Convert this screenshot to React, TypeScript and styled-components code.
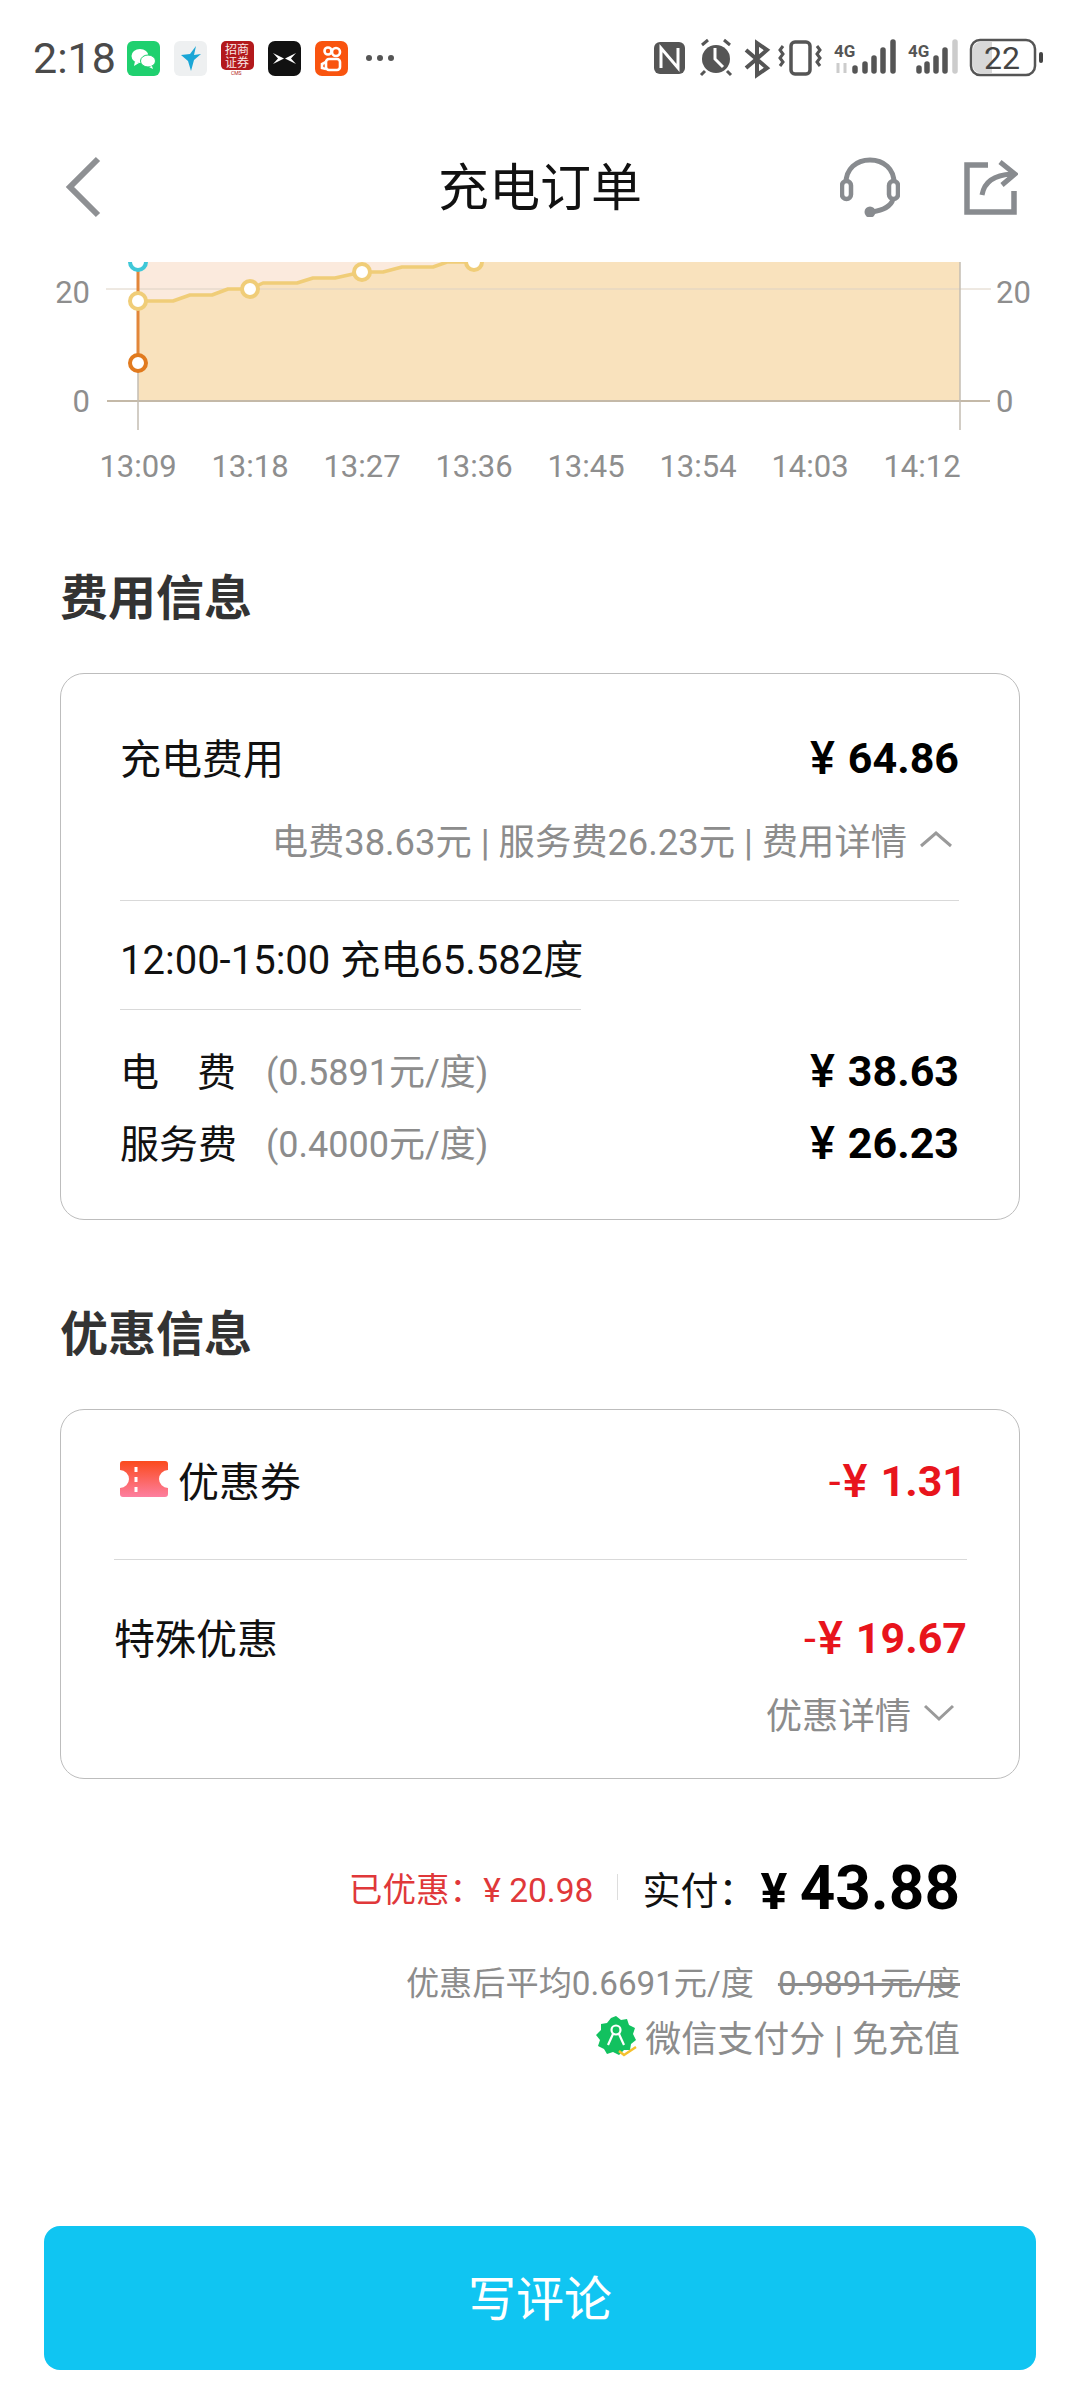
import styled, { createGlobalStyle } from "styled-components";

const GlobalStyle = createGlobalStyle`
  html, body {
    margin: 0;
    padding: 0;
    background: #fff;
    font-family: "Roboto", "Noto Sans CJK SC", sans-serif;
  }
`;

const Page = styled.div`
  width: 1080px;
  height: 2400px;
  overflow: hidden;
  background: #fff;
  display: flex;
  flex-direction: column;
`;

const StatusBar = styled.div`
  height: 116px;
  padding: 0 30px 0 33px;
  box-sizing: border-box;
  display: flex;
  align-items: center;
  color: #4a4a4a;
`;

const Time = styled.span`
  font-size: 43px;
  width: 94px;
`;

const AppIcons = styled.div`
  display: flex;
  align-items: center;
  gap: 14px;
`;

const AppIcon = styled.svg`
  width: 33px;
  height: 35px;
  display: block;
`;

const MoreDots = styled.span`
  margin-left: 18px;
  display: flex;
  gap: 5px;
`;

const Dot = styled.i`
  width: 6px;
  height: 6px;
  border-radius: 50%;
  background: #555;
`;

const StatusRight = styled.svg`
  margin-left: auto;
  display: block;
  width: 400px;
  height: 44px;
`;

const Header = styled.div`
  height: 146px;
  padding: 0 62px 4px 65px;
  box-sizing: border-box;
  display: flex;
  align-items: center;
  justify-content: space-between;
  position: relative;
`;

const Title = styled.h1`
  position: absolute;
  left: 0;
  right: 0;
  margin: 0;
  padding-bottom: 6px;
  text-align: center;
  font-size: 51px;
  font-weight: 400;
  color: #111;
`;

const HeaderActions = styled.div`
  display: flex;
  align-items: center;
  gap: 64px;
`;

const ChartBox = styled.svg`
  display: block;
  width: 1080px;
  height: 232px;
`;

const Section = styled.section`
  padding: 0 60px;
`;

const SectionTitle = styled.h2<{ $top: number }>`
  margin: ${({ $top }) => $top}px 0 0 0;
  height: 66px;
  line-height: 66px;
  font-size: 48px;
  font-weight: 700;
  color: #333;
`;

const Card = styled.div<{ $pad: string; $h: number }>`
  margin-top: 41px;
  height: ${({ $h }) => $h}px;
  border: 1px solid #bdbdbd;
  border-radius: 24px;
  padding: ${({ $pad }) => $pad};
  box-sizing: border-box;
`;

const Row = styled.div<{ $h: number; $mt?: number; $pt?: number }>`
  height: ${({ $h }) => $h}px;
  margin-top: ${({ $mt }) => $mt ?? 0}px;
  padding-top: ${({ $pt }) => $pt ?? 0}px;
  box-sizing: border-box;
  display: flex;
  align-items: center;
  justify-content: space-between;
`;

const Label = styled.span`
  font-size: 41px;
  color: #111;
  display: flex;
  align-items: center;
  white-space: nowrap;
`;

const SlotLabel = styled(Label)`
  font-size: 40px;
`;

const Spaced = styled.span`
  width: 116px;
  font-size: 39px;
  display: inline-flex;
  justify-content: space-between;
`;

const Rate = styled.span`
  margin-left: 30px;
  font-size: 36px;
  color: #8c8c8c;
`;

const Amount = styled.span<{ $red?: boolean }>`
  padding-top: 3px;
  font-size: 43px;
  font-weight: 700;
  color: ${({ $red }) => ($red ? "#e8141c" : "#000")};
  display: inline-flex;
  align-items: center;
  white-space: pre;
`;

const Yen = styled.span`
  font-size: 47px;
  font-weight: 500;
  margin-right: 13px;
  line-height: 1;
`;

const Minus = styled.span`
  font-weight: 400;
  margin-right: 2px;
`;

const Note = styled.div<{ $right: number; $h?: number; $mt?: number }>`
  display: flex;
  align-items: center;
  justify-content: flex-end;
  gap: 12px;
  font-size: 36.3px;
  color: #8c8c8c;
  height: ${({ $h }) => $h ?? 50}px;
  margin-top: ${({ $mt }) => $mt ?? 0}px;
  padding-right: ${({ $right }) => $right}px;
`;

const Rule = styled.div<{ $w?: number; $mt?: number }>`
  height: 1px;
  background: #d9d9d9;
  margin-top: ${({ $mt }) => $mt ?? 0}px;
  width: ${({ $w }) => ($w ? `${$w}px` : "100%")};
`;

const CouponIcon = styled.svg`
  width: 48px;
  height: 36px;
  margin: 0 10px 0 6px;
`;

const Summary = styled.div`
  margin-top: 71px;
  padding-right: 120px;
  display: flex;
  align-items: center;
  justify-content: flex-end;
  height: 74px;
`;

const Saved = styled.span`
  font-size: 33.6px;
  color: #e0383a;
`;

const SummaryBar = styled.i`
  width: 1px;
  height: 26px;
  background: #ddd;
  margin: 0 24px;
`;

const PaidLabel = styled.span`
  font-size: 38px;
  color: #111;
  margin-right: 4px;
`;

const Paid = styled.span`
  font-size: 62px;
  font-weight: 700;
  color: #000;
  white-space: pre;
`;

const PaidYen = styled.span`
  font-size: 50px;
`;

const Struck = styled.s`
  margin-left: 24px;
`;

const Average = styled(Note)`
  margin-top: 31px;
  padding-right: 120px;
  gap: 0;
  font-size: 33.2px;
`;

const WeChat = styled(Note)`
  margin-top: 6px;
  padding-right: 120px;
  gap: 8px;
  font-size: 36px;
`;

const Spacer = styled.div`
  flex: 1;
`;

const SubmitButton = styled.button`
  margin: 0 44px 30px;
  height: 144px;
  padding: 0 0 6px;
  border: none;
  border-radius: 16px;
  background: #10c5f2;
  color: #fff;
  font-family: inherit;
  font-size: 48px;
`;

const times = ["13:09", "13:18", "13:27", "13:36", "13:45", "13:54", "14:03", "14:12"];
const linePoints =
  "M138 301H173L190 295H212L228 289H250L263 283H297L313 278H335L362 272H383L402 267H433L447 262H473";

const Chart = () => (
  <ChartBox viewBox="0 262 1080 232">
    <rect x="138" y="262" width="822" height="139" fill="#f9e2bd" />
    <path d={`${linePoints}V262H138Z`} fill="#fbeadd" />
    <path d="M106 289H991" stroke="#ddd2c4" strokeWidth="1" />
    <path d="M107 401H990" stroke="#c4b9a8" strokeWidth="2" />
    <path d="M138 363V430M960 262V430" stroke="#c4bdb2" strokeWidth="1.5" />
    <path d="M138 262V363" stroke="#e2863a" strokeWidth="3" />
    <path d={linePoints} fill="none" stroke="#f0cd78" strokeWidth="3.5" strokeLinejoin="round" />
    <circle cx="138" cy="262" r="8" fill="#fff" stroke="#3fc8d8" strokeWidth="4" />
    <circle cx="138" cy="301" r="8" fill="#fff" stroke="#f0cd78" strokeWidth="4" />
    <circle cx="138" cy="363" r="8" fill="#fff" stroke="#e17a1e" strokeWidth="4" />
    <circle cx="250" cy="289" r="8" fill="#fff" stroke="#f0cd78" strokeWidth="4" />
    <circle cx="362" cy="272" r="8" fill="#fff" stroke="#f0cd78" strokeWidth="4" />
    <circle cx="474" cy="262" r="8" fill="#fff" stroke="#f0cd78" strokeWidth="4" />
    <g fontFamily="Roboto, sans-serif" fontSize="31" fill="#8e8e8e">
      <text x="90" y="303" textAnchor="end">20</text>
      <text x="90" y="412" textAnchor="end">0</text>
      <text x="996" y="303">20</text>
      <text x="996" y="412">0</text>
      {times.map((t, i) => (
        <text key={t} x={138 + i * 112} y="477" textAnchor="middle">{t}</text>
      ))}
    </g>
  </ChartBox>
);

const StatusIcons = () => (
  <StatusRight viewBox="650 38 400 44">
    <rect x="654" y="44" width="31" height="32" rx="6" fill="#555" />
    <path d="M661 70V50L678 70V50" fill="none" stroke="#fff" strokeWidth="3" />
    <circle cx="716" cy="61" r="14" fill="#555" />
    <path d="M702 47L708 42M730 47L724 42M705 73L701 77M727 73L731 77" stroke="#555" strokeWidth="3" fill="none" />
    <path d="M715 50V61L723 69" stroke="#fff" strokeWidth="3" fill="none" />
    <path d="M746 52L767 70 757 77V45L767 52 746 70" fill="none" stroke="#555" strokeWidth="4" />
    <rect x="791" y="44" width="19" height="32" rx="4" fill="none" stroke="#555" strokeWidth="3.5" />
    <path d="M783 48L780 52 783 56 780 60 783 64 780 68M817 48L820 52 817 56 820 60 817 64 820 68" fill="none" stroke="#555" strokeWidth="3" />
    <g fill="#555" fontFamily="Roboto, sans-serif" fontWeight="700" fontSize="17">
      <text x="834" y="59">4G</text>
      <text x="908" y="59">4G</text>
    </g>
    <path d="M838 65V75M845 65V75" stroke="#ccc" strokeWidth="3" />
    <path d="M855 70V73M865 66V73M874 60V73M883 52V73M893 44V73M919 70V73M927 66V73M936 60V73M945 52V73" stroke="#555" strokeWidth="5.5" strokeLinecap="round" />
    <path d="M955 44V73" stroke="#ccc" strokeWidth="5.5" strokeLinecap="round" />
    <rect x="971" y="42" width="64" height="35" rx="9" fill="#fff" stroke="#555" strokeWidth="2.5" />
    <path d="M973 51a7 7 0 0 1 7-7h12v31h-12a7 7 0 0 1-7-7Z" fill="#d8d8d8" />
    <text x="984" y="71" fontFamily="Roboto, sans-serif" fontSize="32" fill="#444">22</text>
    <rect x="1039" y="54" width="4" height="11" rx="2" fill="#444" />
  </StatusRight>
);

export default function App() {
  return (
    <Page>
      <GlobalStyle />
      <StatusBar>
        <Time>2:18</Time>
        <AppIcons>
          <AppIcon viewBox="0 0 33 35">
            <rect width="33" height="35" rx="6" fill="#1fd06f" />
            <ellipse cx="13" cy="15" rx="8.5" ry="7" fill="#fff" />
            <path d="M8 20L7 25 12 22Z" fill="#fff" />
            <ellipse cx="21" cy="20" rx="7.5" ry="6" fill="#fff" stroke="#1fd06f" />
            <path d="M25 25L26 28 22 26Z" fill="#fff" />
          </AppIcon>
          <AppIcon viewBox="0 0 33 35">
            <rect width="33" height="35" rx="6" fill="#eef0f1" />
            <path d="M7 14L16 13 22 5 20 14 27 13 20 19 17 30 14 20Z" fill="#1aa6d6" />
          </AppIcon>
          <AppIcon viewBox="0 0 33 35">
            <rect width="33" height="29" rx="5" fill="#b3191c" />
            <g fill="#f8e6e6" fontFamily="'Noto Sans CJK SC', sans-serif" fontSize="12">
              <text x="4" y="13">招商</text>
              <text x="4" y="26">证券</text>
            </g>
            <text x="10" y="34" fill="#b3191c" fontFamily="Roboto, sans-serif" fontSize="5">CMS</text>
          </AppIcon>
          <AppIcon viewBox="0 0 33 35">
            <rect width="33" height="35" rx="7" fill="#111" />
            <path d="M5 12L16 17.5 5 23 10 17.5ZM28 12L17 17.5 28 23 23 17.5Z" fill="#fff" />
          </AppIcon>
          <AppIcon viewBox="0 0 33 35">
            <rect width="33" height="35" rx="7" fill="#f9540f" />
            <g fill="none" stroke="#fff" strokeWidth="2.6">
              <circle cx="13" cy="10" r="3.5" />
              <circle cx="21" cy="11" r="4" />
              <rect x="11" y="18" width="14" height="11" rx="3" />
              <path d="M11 21L7 23V27L11 28" />
            </g>
          </AppIcon>
        </AppIcons>
        <MoreDots>
          <Dot />
          <Dot />
          <Dot />
        </MoreDots>
        <StatusIcons />
      </StatusBar>
      <Header>
        <svg width="36" height="62" viewBox="0 0 36 62">
          <path d="M33 3L5 31L33 59" fill="none" stroke="#8e9093" strokeWidth="6" />
        </svg>
        <Title>充电订单</Title>
        <HeaderActions>
          <svg width="60" height="60" viewBox="0 0 60 60">
            <path d="M6 31V26C6 12 16 3 30 3S54 12 54 26V31" fill="none" stroke="#888b8f" strokeWidth="5" />
            <rect x="2" y="24" width="9" height="18" rx="4.5" fill="#fff" stroke="#888b8f" strokeWidth="4.5" />
            <rect x="49" y="24" width="9" height="18" rx="4.5" fill="#fff" stroke="#888b8f" strokeWidth="4.5" />
            <path d="M53 42C51 50 43 53 32 55" fill="none" stroke="#888b8f" strokeWidth="5" />
            <circle cx="30" cy="55" r="5.5" fill="#888b8f" />
          </svg>
          <svg width="54" height="56" viewBox="0 0 54 56">
            <path d="M24 6H3V53H50V32" fill="none" stroke="#888b8f" strokeWidth="5.5" />
            <path d="M18 36C20 24 28 16 48 15M36 3L51 15 38 26" fill="none" stroke="#888b8f" strokeWidth="5" />
          </svg>
        </HeaderActions>
      </Header>
      <Chart />
      <Section>
        <SectionTitle $top={72}>费用信息</SectionTitle>
        <Card $pad="40px 60px 0 59px" $h={547}>
          <Row $h={84}>
            <Label>充电费用</Label>
            <Amount>
              <Yen>¥</Yen>64.86
            </Amount>
          </Row>
          <Note $right={6} $h={58} $mt={12}>
            <span>电费38.63元 | 服务费26.23元 | 费用详情</span>
            <svg width="34" height="18" viewBox="0 0 34 18">
              <path d="M2 16L17 3L32 16" fill="none" stroke="#9a9a9a" strokeWidth="3" />
            </svg>
          </Note>
          <Rule $mt={32} />
          <Row $h={108} $pt={4}>
            <SlotLabel>12:00-15:00 充电65.582度</SlotLabel>
          </Row>
          <Rule $w={461} />
          <Row $h={72} $mt={23}>
            <Label>
              <Spaced>
                <span>电</span>
                <span>费</span>
              </Spaced>
              <Rate>(0.5891元/度)</Rate>
            </Label>
            <Amount>
              <Yen>¥</Yen>38.63
            </Amount>
          </Row>
          <Row $h={72}>
            <Label>
              <Spaced>服务费</Spaced>
              <Rate>(0.4000元/度)</Rate>
            </Label>
            <Amount>
              <Yen>¥</Yen>26.23
            </Amount>
          </Row>
        </Card>
        <SectionTitle $top={82}>优惠信息</SectionTitle>
        <Card $pad="27px 52px 0 53px" $h={370}>
          <Row $h={84}>
            <Label>
              <CouponIcon viewBox="0 0 48 36">
                <defs>
                  <linearGradient id="coupon" x1="0" y1="0" x2="0" y2="1">
                    <stop offset="0" stopColor="#fb4a1c" />
                    <stop offset="1" stopColor="#fd7fa0" />
                  </linearGradient>
                </defs>
                <path d="M3 0H45a3 3 0 0 1 3 3V9a9 9 0 0 0 0 18V33a3 3 0 0 1-3 3H3a3 3 0 0 1-3-3V27a9 9 0 0 0 0-18V3a3 3 0 0 1 3-3Z" fill="url(#coupon)" />
                <path d="M16 6V32" stroke="#fff" strokeWidth="3" strokeDasharray="5 5" />
              </CouponIcon>
              优惠券
            </Label>
            <Amount $red>
              <Minus>-</Minus>
              <Yen>¥</Yen>1.31
            </Amount>
          </Row>
          <Rule $mt={38} />
          <Row $h={84} $mt={34}>
            <Label>特殊优惠</Label>
            <Amount $red>
              <Minus>-</Minus>
              <Yen>¥</Yen>19.67
            </Amount>
          </Row>
          <Note $right={12} $h={70}>
            <span>优惠详情</span>
            <svg width="32" height="18" viewBox="0 0 32 18">
              <path d="M2 2L16 15L30 2" fill="none" stroke="#9a9a9a" strokeWidth="3" />
            </svg>
          </Note>
        </Card>
      </Section>
      <Summary>
        <Saved>已优惠：¥ 20.98</Saved>
        <SummaryBar />
        <PaidLabel>实付：</PaidLabel>
        <Paid>
          <PaidYen>¥ </PaidYen>43.88
        </Paid>
      </Summary>
      <Average $right={120}>
        <span>优惠后平均0.6691元/度</span>
        <Struck>0.9891元/度</Struck>
      </Average>
      <WeChat $right={120}>
        <svg width="42" height="42" viewBox="0 0 42 42">
          <path d="M21 1L26 5 32 4 34 10 40 13 38 19 41 25 36 29 35 35 29 35 24 40 18 37 12 39 9 34 3 31 5 25 1 20 6 15 6 9 12 8 16 3Z" fill="#12c15f" />
          <circle cx="21" cy="15" r="4.5" fill="none" stroke="#fff" strokeWidth="2.2" />
          <path d="M18 19L13 30M24 19L29 30" stroke="#fff" strokeWidth="2.2" />
          <path d="M24 36L29 40 41 32" fill="none" stroke="#f5c12e" strokeWidth="2.5" />
        </svg>
        <span>微信支付分 | 免充值</span>
      </WeChat>
      <Spacer />
      <SubmitButton>写评论</SubmitButton>
    </Page>
  );
}
